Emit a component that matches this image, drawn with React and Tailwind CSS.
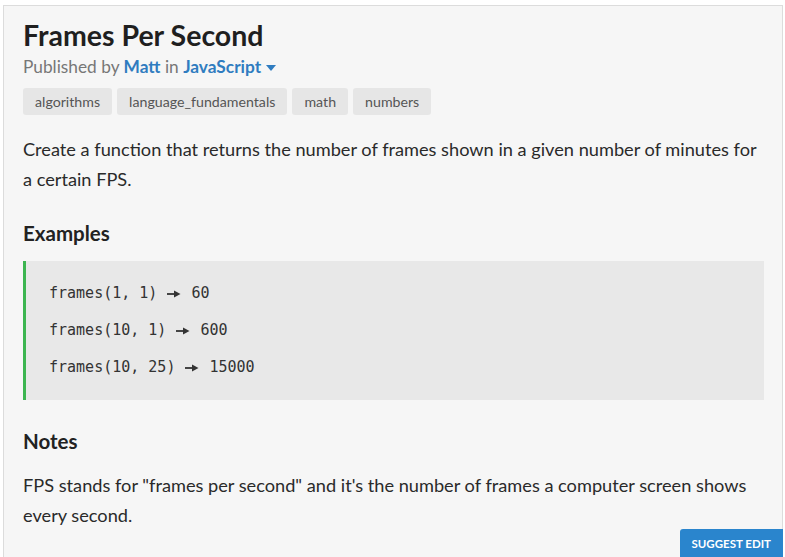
export default function App() {
    const tags = ['algorithms', 'language_fundamentals', 'math', 'numbers'];
    const examples = [
        ['frames(1, 1)', '60'],
        ['frames(10, 1)', '600'],
        ['frames(10, 25)', '15000'],
    ];

    return (
        <div className="w-[785px] h-[557px] bg-white pt-[5px] pl-[3px] pr-[2px] overflow-hidden" style={{ fontFamily: 'Lato, "Open Sans", sans-serif' }}>
            <div className="relative h-[560px] bg-[#f6f6f6] border border-[#dcdcdc] pl-[19px] pr-[18px] pt-[11px] text-[#222]">
                <h1 className="text-[28.5px] font-bold leading-[36px] text-[#1f1f1f]">Frames Per Second</h1>
                <div className="text-[17.3px] leading-[22px] text-[#777] mt-[3px]">
                    Published by <span className="text-[#2f7cc0] font-bold">Matt</span> in{' '}
                    <span className="text-[#2f7cc0] font-bold">JavaScript</span>
                    <svg className="inline-block ml-[5px] mb-[2px]" width="10" height="6" viewBox="0 0 10 6">
                        <path d="M0 0 L10 0 L5 6 Z" fill="#2f7cc0" />
                    </svg>
                </div>
                <div className="flex flex-row gap-[5px] mt-[10px]">
                    {
                        tags.map((tag, index) => (
                            <span className="bg-[#e6e6e6] text-[#555] text-[14.2px] h-[27px] px-[12px] flex items-center rounded-[3px]" key={index}>
                                {tag}
                            </span>
                        ))
                    }
                </div>
                <p className="text-[18.2px] leading-[30px] text-[#2a2a2a] mt-[19px]">
                    Create a function that returns the number of frames shown in a given number of minutes for a certain FPS.
                </p>
                <h2 className="text-[20.5px] font-bold leading-[28px] text-[#222] mt-[25px]">Examples</h2>
                <div className="bg-[#e8e8e8] border-l-[3px] border-[#3cb550] mt-[14px] pl-[23px] py-[14px]" style={{ fontFamily: '"DejaVu Sans Mono", monospace' }}>
                    {
                        examples.map((ex, index) => (
                            <div className="flex flex-row items-center text-[15px] leading-[37px] text-[#333] whitespace-pre" key={index}>
                                <span>{ex[0]} </span>
                                <svg className="mx-[1px]" width="14" height="8" viewBox="0 0 14 8">
                                    <path d="M0 3.1 H8 V4.9 H0 Z" fill="#333" />
                                    <path d="M7 0.5 L13.5 4 L7 7.5 Z" fill="#333" />
                                </svg>
                                <span> {ex[1]}</span>
                            </div>
                        ))
                    }
                </div>
                <h2 className="text-[20.5px] font-bold leading-[28px] text-[#222] mt-[27px]">Notes</h2>
                <p className="text-[18.2px] leading-[30px] text-[#2a2a2a] mt-[15px]">
                    FPS stands for "frames per second" and it's the number of frames a computer screen shows every second.
                </p>
                <button className="absolute right-[-1px] top-[523px] bg-[#2a85cd] text-white text-[11.5px] font-bold uppercase h-[29px] px-[12px] rounded-tl-[3px]">
                    Suggest Edit
                </button>
            </div>
        </div>
    );
}
